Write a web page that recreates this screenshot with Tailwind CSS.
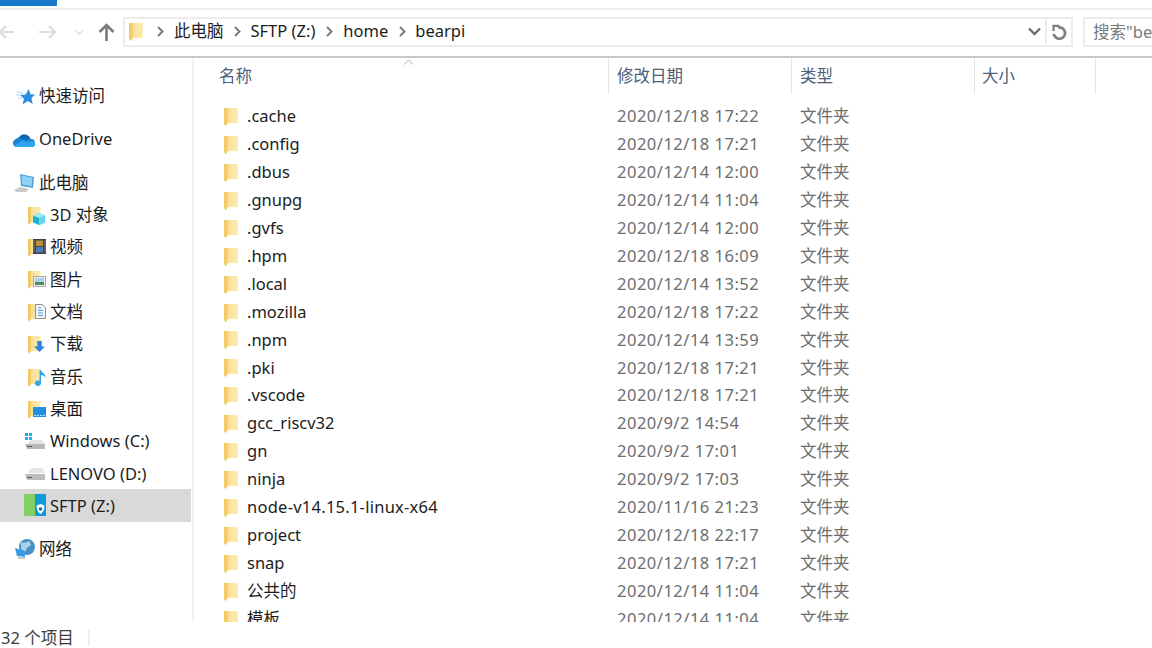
<!DOCTYPE html>
<html lang="zh">
<head>
<meta charset="utf-8">
<script src="https://cdn.jsdelivr.net/npm/@tailwindcss/browser@4"></script>
</head>
<body class="bg-white">
<svg class="absolute w-0 h-0" width="0" height="0">
  <defs>
    <linearGradient id="fg" x1="0" y1="0" x2="1" y2="0"><stop offset="0" stop-color="#f6d47a"/><stop offset="0.5" stop-color="#fbe3a0"/><stop offset="1" stop-color="#fde9b0"/></linearGradient>
    <symbol id="folder" viewBox="0 0 14 19">
      <path d="M0 1h13.500v15H3.500L2 19 0 17z" fill="url(#fg)"/>
      <path d="M0 1h3.500v15L2 19 0 17z" fill="#f2cb68"/>
      <path d="M8.500 1h5v15h-5z" fill="#fce6a8"/>
    </symbol>
    <symbol id="qfolder" viewBox="0 0 14 19">
      <path d="M0 1h12.500v15H3L1.500 18.500 0 17z" fill="url(#fg)"/>
      <path d="M0 1h3v15l-1.500 2.500L0 17z" fill="#f2cb68"/>
    </symbol>
  </defs>
</svg>
<div class="w-[1152px] h-[648px] overflow-hidden flex flex-col font-['Noto_Sans','Noto_Sans_CJK_SC',sans-serif] text-[16.5px] text-[#1c1c1c]">
  <div class="h-[10px] shrink-0 border-b-2 border-[#f0f0f0]">
    <div class="w-[57px] h-[6px] bg-[#1979ca]"></div>
  </div>
  <div class="h-[48px] shrink-0 border-b-2 border-[#c8c8c8] flex items-center pb-[2px]">
    <div class="w-[123px] flex items-center shrink-0">
      <svg class="ml-[-2px] w-[18px] h-[16px]" viewBox="0 0 18 16" fill="none" stroke="#dcdcdc" stroke-width="2.200"><path d="M16 8H2M8 2 2 8l6 6"/></svg>
      <svg class="ml-[23px] w-[18px] h-[16px]" viewBox="0 0 18 16" fill="none" stroke="#dcdcdc" stroke-width="2.200"><path d="M0 8h15M10 2l6 6-6 6"/></svg>
      <svg class="ml-[17px] w-[10px] h-[7px]" viewBox="0 0 10 7" fill="none" stroke="#e0e0e0" stroke-width="1.600"><path d="M1 1l4 4 4-4"/></svg>
      <svg class="ml-[14px] w-[17px] h-[18px]" viewBox="0 0 17 18" fill="none" stroke="#7b7b7b" stroke-width="2.600"><path d="M8.500 18V2M1.500 9l7-7 7 7"/></svg>
    </div>
    <div class="w-[950px] h-[30px] shrink-0 border-2 border-[#ececec] flex items-center pb-[1px]">
      <svg class="ml-[4px] w-[14px] h-[19px]"><use href="#folder"/></svg>
      <svg class="ml-[14px] w-[7px] h-[11px]" viewBox="0 0 7 11" fill="none" stroke="#7c7c7c" stroke-width="2"><path d="M1 1l4.500 4.500L1 10"/></svg>
      <span class="ml-[10px]">此电脑</span>
      <svg class="ml-[10px] w-[7px] h-[11px]" viewBox="0 0 7 11" fill="none" stroke="#7c7c7c" stroke-width="2"><path d="M1 1l4.500 4.500L1 10"/></svg>
      <span class="ml-[10px]">SFTP (Z:)</span>
      <svg class="ml-[11px] w-[7px] h-[11px]" viewBox="0 0 7 11" fill="none" stroke="#7c7c7c" stroke-width="2"><path d="M1 1l4.500 4.500L1 10"/></svg>
      <span class="ml-[10px]">home</span>
      <svg class="ml-[11px] w-[7px] h-[11px]" viewBox="0 0 7 11" fill="none" stroke="#7c7c7c" stroke-width="2"><path d="M1 1l4.500 4.500L1 10"/></svg>
      <span class="ml-[9px]">bearpi</span>
      <svg class="ml-auto mr-[4px] w-[13px] h-[9px]" viewBox="0 0 13 9" fill="none" stroke="#6f6f6f" stroke-width="2.400"><path d="M1 1.500l5.500 5.500L12 1.500"/></svg>
      <div class="w-[26px] h-full border-l-2 border-[#ececec] flex items-center justify-center">
        <svg class="w-[15px] h-[16px]" viewBox="0 0 15 16" fill="none" stroke="#808080" stroke-width="2.700"><path d="M6 3.500a5.700 5.700 0 1 1-4.300 6.500"/><path d="M1.500 7V1.800h6" stroke-width="2.200"/></svg>
      </div>
    </div>
    <div class="ml-[10px] flex-1 h-[30px] border-2 border-r-0 border-[#ececec] flex items-center pl-[8px] text-[#7a7a7a] whitespace-nowrap overflow-hidden">搜索"be</div>
  </div>
  <div class="flex-1 min-h-0 flex">
    <aside class="w-[194px] shrink-0 border-r-2 border-[#f2f2f2] pt-[21.600px] flex flex-col">
      <div class="h-[32.350px] flex items-center pt-[2px]">
        <svg class="ml-[16px] w-[19px] h-[16px] shrink-0" viewBox="0 0 19 16"><path d="M12.500 0l2 5.300L19 5.600l-3.600 3.600L16.800 15l-5-3L6.500 15.500 8 9.700 4 6l5.800-.4z" fill="#2a8fe0"/><path d="M1 2.500l6 2M0 5.500l5 1M2 9l4 0" stroke="#a9d3f3" stroke-width="1"/></svg>
        <span class="ml-[4px]">快速访问</span>
      </div>
      <div class="h-[10.750px]"></div>
      <div class="h-[32.350px] flex items-center pt-[2px]">
        <svg class="ml-[13px] w-[22px] h-[15px] shrink-0" viewBox="0 0 22 15"><path d="M6 5A6.500 6.500 0 0 1 17.500 7L10 12z" fill="#0f64b4"/><path d="M4 15a4 4 0 0 1-1.500-7.700L6 5l4 3 7.500-1A4 4 0 0 1 18.500 15z" fill="#1c82d4"/><path d="M1.500 13.500 10 8l3 2 8.500-1A3.500 3.500 0 0 1 18.500 15H4a4 4 0 0 1-2.500-1.500z" fill="#2fa4ec"/></svg>
        <span class="ml-[4px]">OneDrive</span>
      </div>
      <div class="h-[10.750px]"></div>
      <div class="h-[32.350px] flex items-center pt-[2px]">
        <svg class="ml-[14px] w-[21px] h-[19px] shrink-0" viewBox="0 0 21 19"><path d="M6 1l14 3-1 11-12-2z" fill="#4f9fd4"/><path d="M7.500 2.500l11 2.300-.8 8.500-9.700-1.800z" fill="#8fd0f3"/><path d="M0 17l6-3 9 2-3 3H2z" fill="#c9c9c9"/></svg>
        <span class="ml-[4px]">此电脑</span>
      </div>
      <div class="h-[32.350px] flex items-center pt-[2px]">
        <span class="relative ml-[28px] w-[14px] h-[19px] shrink-0"><svg class="w-[14px] h-[19px]"><use href="#qfolder"/></svg><svg class="absolute left-[5px] top-[7px] w-[12px] h-[12px]" viewBox="0 0 12 12"><path d="M6 0l6 2.500v7L6 12 0 9.500v-7z" fill="#19b3d3"/><path d="M6 5l6-2.500v7L6 12z" fill="#67d6e8"/><path d="M6 0l6 2.500L6 5 0 2.500z" fill="#a5e8f2"/></svg></span>
        <span class="ml-[8px]">3D 对象</span>
      </div>
      <div class="h-[32.350px] flex items-center pt-[2px]">
        <span class="relative ml-[28px] w-[14px] h-[19px] shrink-0"><svg class="w-[14px] h-[19px]"><use href="#qfolder"/></svg><svg class="absolute left-[5px] top-[1px] w-[13px] h-[15px]" viewBox="0 0 13 15"><rect width="13" height="15" fill="#444"/><rect x="3" y="1.500" width="7" height="5.500" fill="#b9903a"/><rect x="3" y="8" width="7" height="5.500" fill="#4f7dbc"/><path d="M1 1.500v12M12 1.500v12" stroke="#bbb" stroke-dasharray="1 1"/></svg></span>
        <span class="ml-[8px]">视频</span>
      </div>
      <div class="h-[32.350px] flex items-center pt-[2px]">
        <span class="relative ml-[28px] w-[14px] h-[19px] shrink-0"><svg class="w-[14px] h-[19px]"><use href="#qfolder"/></svg><svg class="absolute left-[5px] top-[6px] w-[13px] h-[11px]" viewBox="0 0 13 11"><rect x=".5" y=".5" width="12" height="10" fill="#ececec" stroke="#a8a8a8"/><rect x="2" y="2" width="9" height="4" fill="#a8d2ee"/><rect x="2" y="6" width="9" height="3" fill="#4f8a5a"/></svg></span>
        <span class="ml-[8px]">图片</span>
      </div>
      <div class="h-[32.350px] flex items-center pt-[2px]">
        <span class="relative ml-[28px] w-[14px] h-[19px] shrink-0"><svg class="w-[14px] h-[19px]"><use href="#qfolder"/></svg><svg class="absolute left-[7px] top-[1px] w-[11px] h-[15px]" viewBox="0 0 11 15"><path d="M.5.500h7l3 3v11H.5z" fill="#f4f4f4" stroke="#8f8f8f"/><path d="M3 4h3M3 6.500h5M3 9h5M3 11.500h5" stroke="#4aa3df"/></svg></span>
        <span class="ml-[8px]">文档</span>
      </div>
      <div class="h-[32.350px] flex items-center pt-[2px]">
        <span class="relative ml-[28px] w-[14px] h-[19px] shrink-0"><svg class="w-[14px] h-[19px]"><use href="#qfolder"/></svg><svg class="absolute left-[6px] top-[6px] w-[11px] h-[11px]" viewBox="0 0 12 12"><path d="M3.500 0h5v6H12l-6 6-6-6h3.500z" fill="#2f86d8"/></svg></span>
        <span class="ml-[8px]">下载</span>
      </div>
      <div class="h-[32.350px] flex items-center pt-[2px]">
        <span class="relative ml-[28px] w-[14px] h-[19px] shrink-0"><svg class="w-[14px] h-[19px]"><use href="#qfolder"/></svg><svg class="absolute left-[7px] top-[2px] w-[11px] h-[16px]" viewBox="0 0 11 17"><path d="M4.500 0H6c.5 3 5.500 3.500 4.500 8.500C10 6 8 5.500 6 5.500V14a3.200 3 0 1 1-1.500-2.500z" fill="#2fa6e8"/></svg></span>
        <span class="ml-[8px]">音乐</span>
      </div>
      <div class="h-[32.350px] flex items-center pt-[2px]">
        <span class="relative ml-[28px] w-[14px] h-[19px] shrink-0"><svg class="w-[14px] h-[19px]"><use href="#qfolder"/></svg><svg class="absolute left-[5px] top-[7px] w-[13px] h-[10px]" viewBox="0 0 13 10"><rect width="13" height="10" fill="#2090e0"/><path d="M1 8.500h11" stroke="#bfe3fa" stroke-dasharray="2 1"/></svg></span>
        <span class="ml-[8px]">桌面</span>
      </div>
      <div class="h-[32.350px] flex items-center pt-[2px]">
        <svg class="ml-[24px] w-[21px] h-[19px] shrink-0" viewBox="0 0 21 19"><path d="M1 1h3v3H1zM5 1h3v3H5zM1 5h3v3H1zM5 5h3v3H5z" fill="#22b0e8"/><path d="M4 11l3-3h11l3 4H4z" fill="#e4e4e4"/><path d="M1 12h20v5H3z" fill="#b8b8b8"/><path d="M3 14h5v1H3z" fill="#555"/></svg>
        <span class="ml-[5px]">Windows (C:)</span>
      </div>
      <div class="h-[32.350px] flex items-center pt-[2px]">
        <svg class="ml-[24px] w-[21px] h-[13px] shrink-0" viewBox="0 0 21 13"><path d="M4 4l3-4h11l3 5H4z" fill="#e6e6e6"/><path d="M1 6h20v6H3z" fill="#bdbdbd"/><path d="M3 9h5v1H3z" fill="#555"/></svg>
        <span class="ml-[5px]">LENOVO (D:)</span>
      </div>
      <div class="h-[32.350px] flex items-center pt-[2px] mr-[1px] bg-[#d9d9d9]">
        <svg class="ml-[24px] w-[22px] h-[22px] shrink-0 mt-[-2px]" viewBox="0 0 22 22"><rect width="11" height="22" fill="#83cf64"/><rect x="11" width="11" height="22" fill="#0f9ad8"/><path d="M16.500 10l4 1.500c0 4-1.500 7-4 8.500-2.500-1.500-4-4.500-4-8.500z" fill="#fff"/><circle cx="16.500" cy="15" r="1.800" fill="#0f6ab8"/></svg>
        <span class="ml-[4px]">SFTP (Z:)</span>
      </div>
      <div class="h-[10.750px]"></div>
      <div class="h-[32.350px] flex items-center pt-[2px]">
        <svg class="ml-[15px] w-[20px] h-[20px] shrink-0" viewBox="0 0 20 20"><circle cx="12" cy="8" r="8" fill="#4d8fc4"/><path d="M6 3c3 1 5 1 8-1l2 4-4 3-2 4-4-3z" fill="#a8d5ea"/><path d="M0 9l10 3v6l-8-1z" fill="#3a9be0"/><path d="M3 18h7v2H3z" fill="#c8c8c8"/></svg>
        <span class="ml-[4px]">网络</span>
      </div>
    </aside>
    <main class="flex-1 min-w-0 flex flex-col overflow-hidden">
      <div class="h-[36px] shrink-0 flex text-[#4c607a] relative">
        <svg class="absolute left-[209px] top-[1px] w-[11px] h-[6px]" viewBox="0 0 11 6" fill="none" stroke="#a8a8a8"><path d="M1 5.500l4.500-4.500 4.500 4.500"/></svg>
        <div class="w-[415px] shrink-0 border-r border-[#e6e6e6] pl-[25px] pt-[1px] flex items-center">名称</div>
        <div class="w-[183px] shrink-0 border-r border-[#e6e6e6] pl-[8px] pt-[1px] flex items-center">修改日期</div>
        <div class="w-[183px] shrink-0 border-r border-[#e6e6e6] pl-[8px] pt-[1px] flex items-center">类型</div>
        <div class="w-[121px] shrink-0 border-r border-[#e6e6e6] pl-[7px] pt-[1px] flex items-center">大小</div>
      </div>
      <div class="pt-[8.500px] flex-1 min-h-0 overflow-hidden">
        <div class="flex h-[27.940px] items-center"><svg class="ml-[30px] w-[14px] h-[19px] shrink-0"><use href="#folder"/></svg><span class="ml-[9px] w-[370px] shrink-0">.cache</span><span class="w-[183px] shrink-0 text-[#6d6d6d] tracking-[0.5px]">2020/12/18 17:22</span><span class="text-[#6d6d6d]">文件夹</span></div>
        <div class="flex h-[27.940px] items-center"><svg class="ml-[30px] w-[14px] h-[19px] shrink-0"><use href="#folder"/></svg><span class="ml-[9px] w-[370px] shrink-0">.config</span><span class="w-[183px] shrink-0 text-[#6d6d6d] tracking-[0.5px]">2020/12/18 17:21</span><span class="text-[#6d6d6d]">文件夹</span></div>
        <div class="flex h-[27.940px] items-center"><svg class="ml-[30px] w-[14px] h-[19px] shrink-0"><use href="#folder"/></svg><span class="ml-[9px] w-[370px] shrink-0">.dbus</span><span class="w-[183px] shrink-0 text-[#6d6d6d] tracking-[0.5px]">2020/12/14 12:00</span><span class="text-[#6d6d6d]">文件夹</span></div>
        <div class="flex h-[27.940px] items-center"><svg class="ml-[30px] w-[14px] h-[19px] shrink-0"><use href="#folder"/></svg><span class="ml-[9px] w-[370px] shrink-0">.gnupg</span><span class="w-[183px] shrink-0 text-[#6d6d6d] tracking-[0.5px]">2020/12/14 11:04</span><span class="text-[#6d6d6d]">文件夹</span></div>
        <div class="flex h-[27.940px] items-center"><svg class="ml-[30px] w-[14px] h-[19px] shrink-0"><use href="#folder"/></svg><span class="ml-[9px] w-[370px] shrink-0">.gvfs</span><span class="w-[183px] shrink-0 text-[#6d6d6d] tracking-[0.5px]">2020/12/14 12:00</span><span class="text-[#6d6d6d]">文件夹</span></div>
        <div class="flex h-[27.940px] items-center"><svg class="ml-[30px] w-[14px] h-[19px] shrink-0"><use href="#folder"/></svg><span class="ml-[9px] w-[370px] shrink-0">.hpm</span><span class="w-[183px] shrink-0 text-[#6d6d6d] tracking-[0.5px]">2020/12/18 16:09</span><span class="text-[#6d6d6d]">文件夹</span></div>
        <div class="flex h-[27.940px] items-center"><svg class="ml-[30px] w-[14px] h-[19px] shrink-0"><use href="#folder"/></svg><span class="ml-[9px] w-[370px] shrink-0">.local</span><span class="w-[183px] shrink-0 text-[#6d6d6d] tracking-[0.5px]">2020/12/14 13:52</span><span class="text-[#6d6d6d]">文件夹</span></div>
        <div class="flex h-[27.940px] items-center"><svg class="ml-[30px] w-[14px] h-[19px] shrink-0"><use href="#folder"/></svg><span class="ml-[9px] w-[370px] shrink-0">.mozilla</span><span class="w-[183px] shrink-0 text-[#6d6d6d] tracking-[0.5px]">2020/12/18 17:22</span><span class="text-[#6d6d6d]">文件夹</span></div>
        <div class="flex h-[27.940px] items-center"><svg class="ml-[30px] w-[14px] h-[19px] shrink-0"><use href="#folder"/></svg><span class="ml-[9px] w-[370px] shrink-0">.npm</span><span class="w-[183px] shrink-0 text-[#6d6d6d] tracking-[0.5px]">2020/12/14 13:59</span><span class="text-[#6d6d6d]">文件夹</span></div>
        <div class="flex h-[27.940px] items-center"><svg class="ml-[30px] w-[14px] h-[19px] shrink-0"><use href="#folder"/></svg><span class="ml-[9px] w-[370px] shrink-0">.pki</span><span class="w-[183px] shrink-0 text-[#6d6d6d] tracking-[0.5px]">2020/12/18 17:21</span><span class="text-[#6d6d6d]">文件夹</span></div>
        <div class="flex h-[27.940px] items-center"><svg class="ml-[30px] w-[14px] h-[19px] shrink-0"><use href="#folder"/></svg><span class="ml-[9px] w-[370px] shrink-0">.vscode</span><span class="w-[183px] shrink-0 text-[#6d6d6d] tracking-[0.5px]">2020/12/18 17:21</span><span class="text-[#6d6d6d]">文件夹</span></div>
        <div class="flex h-[27.940px] items-center"><svg class="ml-[30px] w-[14px] h-[19px] shrink-0"><use href="#folder"/></svg><span class="ml-[9px] w-[370px] shrink-0">gcc_riscv32</span><span class="w-[183px] shrink-0 text-[#6d6d6d] tracking-[0.5px]">2020/9/2 14:54</span><span class="text-[#6d6d6d]">文件夹</span></div>
        <div class="flex h-[27.940px] items-center"><svg class="ml-[30px] w-[14px] h-[19px] shrink-0"><use href="#folder"/></svg><span class="ml-[9px] w-[370px] shrink-0">gn</span><span class="w-[183px] shrink-0 text-[#6d6d6d] tracking-[0.5px]">2020/9/2 17:01</span><span class="text-[#6d6d6d]">文件夹</span></div>
        <div class="flex h-[27.940px] items-center"><svg class="ml-[30px] w-[14px] h-[19px] shrink-0"><use href="#folder"/></svg><span class="ml-[9px] w-[370px] shrink-0">ninja</span><span class="w-[183px] shrink-0 text-[#6d6d6d] tracking-[0.5px]">2020/9/2 17:03</span><span class="text-[#6d6d6d]">文件夹</span></div>
        <div class="flex h-[27.940px] items-center"><svg class="ml-[30px] w-[14px] h-[19px] shrink-0"><use href="#folder"/></svg><span class="ml-[9px] w-[370px] shrink-0 tracking-[0.25px]">node-v14.15.1-linux-x64</span><span class="w-[183px] shrink-0 text-[#6d6d6d] tracking-[0.5px]">2020/11/16 21:23</span><span class="text-[#6d6d6d]">文件夹</span></div>
        <div class="flex h-[27.940px] items-center"><svg class="ml-[30px] w-[14px] h-[19px] shrink-0"><use href="#folder"/></svg><span class="ml-[9px] w-[370px] shrink-0">project</span><span class="w-[183px] shrink-0 text-[#6d6d6d] tracking-[0.5px]">2020/12/18 22:17</span><span class="text-[#6d6d6d]">文件夹</span></div>
        <div class="flex h-[27.940px] items-center"><svg class="ml-[30px] w-[14px] h-[19px] shrink-0"><use href="#folder"/></svg><span class="ml-[9px] w-[370px] shrink-0">snap</span><span class="w-[183px] shrink-0 text-[#6d6d6d] tracking-[0.5px]">2020/12/18 17:21</span><span class="text-[#6d6d6d]">文件夹</span></div>
        <div class="flex h-[27.940px] items-center"><svg class="ml-[30px] w-[14px] h-[19px] shrink-0"><use href="#folder"/></svg><span class="ml-[9px] w-[370px] shrink-0">公共的</span><span class="w-[183px] shrink-0 text-[#6d6d6d] tracking-[0.5px]">2020/12/14 11:04</span><span class="text-[#6d6d6d]">文件夹</span></div>
        <div class="flex h-[27.940px] items-center"><svg class="ml-[30px] w-[14px] h-[19px] shrink-0"><use href="#folder"/></svg><span class="ml-[9px] w-[370px] shrink-0">模板</span><span class="w-[183px] shrink-0 text-[#6d6d6d] tracking-[0.5px]">2020/12/14 11:04</span><span class="text-[#6d6d6d]">文件夹</span></div>
      </div>
    </main>
  </div>
  <div class="h-[26px] shrink-0 flex items-center text-[#3c3c3c]">
    <div class="w-[90px] pl-[1px] mt-[6px] border-r-2 border-[#f0f0f0] h-[16px] flex items-center">32 个项目</div>
  </div>
</div>
</body>
</html>
